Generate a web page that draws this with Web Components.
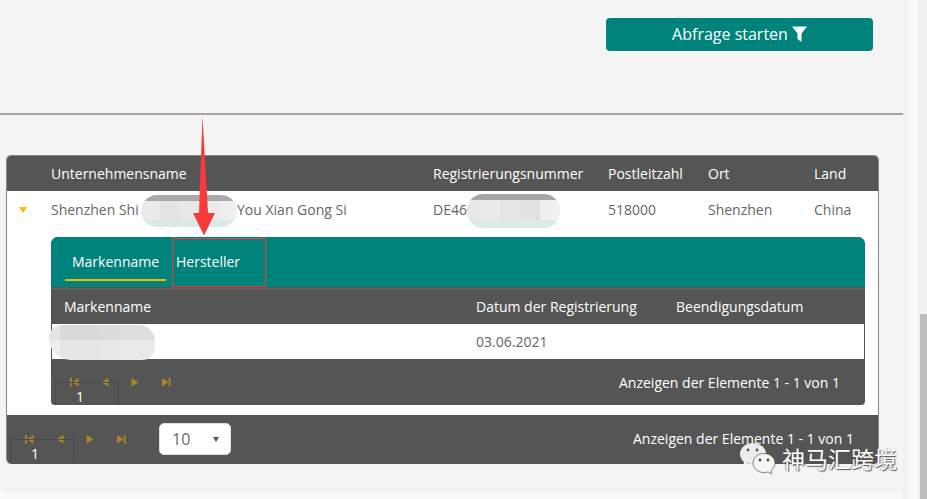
<!DOCTYPE html>
<html><head><meta charset="utf-8"><style>
html,body{margin:0;padding:0;height:499px;overflow:hidden;background:#f9f9f9;font-family:"Open Sans",sans-serif}
</style></head><body>
<app-page></app-page>
<script>
const def=(n,css,html)=>{customElements.define(n,class extends HTMLElement{constructor(){super();const s=this.attachShadow({mode:'open'});s.innerHTML=`<style>${css}</style>${html}`;}})};
const c='#a98722';
const first=`<svg width="10" height="10" viewBox="0 0 10 10"><path d="M1 1h1.800v8.500H1zM9.500 1v8.500L3 5.250z" fill="${c}"/></svg>`;
const prev=`<svg width="10" height="10" viewBox="0 0 10 10"><path d="M8.500 1v8.500L1.500 5.250z" fill="${c}"/></svg>`;
const next=`<svg width="10" height="10" viewBox="0 0 10 10"><path d="M1.500 1v8.500l7-4.250z" fill="${c}"/></svg>`;
const last=`<svg width="10" height="10" viewBox="0 0 10 10"><path d="M9.500 1H7.700v8.500h1.800zM1 1v8.500l6.500-4.250z" fill="${c}"/></svg>`;
def('grid-pager',`:host{display:block;position:relative;width:110px;height:100%}
.icons{display:flex;gap:20.500px;padding-left:var(--il,18px);padding-top:var(--it,18px)}
.icons svg{display:block;flex:none}
.box{position:absolute;left:var(--bl,4px);top:var(--bt,23px);width:64px;bottom:0;border:1px solid #494949;border-bottom:0;color:#fff;font-size:14px;line-height:20px;box-sizing:border-box;padding-left:var(--np,20px);padding-top:4px}`,
`<div class="icons">${first}${prev}${next}${last}</div><div class="box">1</div>`);
def('filter-button',`:host{display:flex;align-items:center;justify-content:center;gap:4px;width:267px;height:33px;background:#00837a;border-radius:4px;color:#fff;font-size:16px;padding-bottom:2px;box-sizing:border-box}
svg{display:block;margin-top:1px}`,`<span>Abfrage starten</span><svg width="15" height="16" viewBox="0 0 15 16"><path d="M0 .500h15L9.500 7.500V16L5.500 13V7.500z" fill="#fff"/></svg>`);
def('app-page',`:host{display:flex;width:927px;height:499px;position:relative;overflow:hidden}
.main{width:903px;height:488px;background:#f4f4f4;box-shadow:0 2px 5px rgba(0,0,0,.05);border-radius:0 0 4px 0;flex:none;display:flex;flex-direction:column}
.filter{display:flex;justify-content:flex-end;padding:18px 30px 0 0;box-sizing:border-box;height:115px;flex:none;border-bottom:2px solid #a5a5a5}
.wrap{padding:40px 0 0 6px}
.grid{width:873px;height:309px;background:#fff;border:1px solid #888;border-bottom:0;box-sizing:border-box;border-radius:5px;overflow:hidden;display:flex;flex-direction:column;color:#666;font-size:14px}
.cols{display:grid;grid-template-columns:44px 382px 175px 100px 106px 1fr;align-items:center}
.head{height:35px;background:#555;color:#fff;flex:none}
.row{height:37px;flex:none;padding-bottom:1px;box-sizing:border-box}
.tri{width:0;height:0;border:4px solid transparent;border-top:6px solid #fcb900;border-bottom:0;margin:1px 0 0 12px}
.detail{margin:9px 0 0 44px;width:814px;height:168px;border-radius:7px 7px 4px 4px;overflow:hidden;background:#555;flex:none;display:flex;flex-direction:column;box-sizing:border-box}
.tabs{height:51px;background:#00837a;display:flex;flex:none;color:#fff;box-sizing:border-box;border-bottom:1px solid #555;padding-left:14px}
.tab{font-size:14px;height:44px;line-height:49px;padding:0 7px;box-sizing:border-box}
.tab.on{border-bottom:2px solid #f5b800;width:101px}
.tab.h{padding:0 0 0 10px;line-height:50px}
.ihead,.irow{display:grid;grid-template-columns:412px 200px 1fr;align-items:center;flex:none}
.ihead{padding-left:13px;height:36px;color:#fff;border-top:1px solid #666;box-sizing:border-box}
.irow{height:35px;background:#fff;margin:0 1px;padding-left:12px}
.ipager{flex:1;display:flex;justify-content:space-between;color:#fff;--it:18px;--bt:23px;--il:18px;padding-right:25px}
.ipager span{align-self:center}
.gap{height:10px;flex:none}
.opager{flex:1;background:#555;display:flex;color:#fff;--it:19px;--bt:24px;--bl:3px;--il:17px;--np:20px;padding:0 24px 2px 0;box-sizing:border-box;position:relative}
.opager span{margin-left:auto;align-self:center}
.sel{position:absolute;left:152px;top:8px;width:72px;height:32px;background:#fff;border:1px solid #ddd;box-sizing:border-box;border-radius:5px;color:#6b6b6b;font-size:16px;line-height:30px;padding-left:12px}
.sel i{position:absolute;right:11px;top:13px;width:0;height:0;border:3.500px solid transparent;border-top:5px solid #555;border-bottom:0}
.gutter{flex:1;display:flex;height:499px}
.shade{width:15px;background:linear-gradient(90deg,#eeeeee,#f9f9f9 70%,#fbfbfb)}
.track{width:9px;background:#f1f1f1;padding:314px 0 0 2px;box-sizing:border-box;height:499px}
.thumb{height:185px;background:#bdbdbd}
.blob{position:absolute;border-radius:16px}
.red{position:absolute;left:172px;top:238px;width:94px;height:49px;border:1px solid #f03b3b;box-sizing:border-box}
.arrow{position:absolute;left:190px;top:115px}
.wm{position:absolute;left:739px;top:440px;display:flex;align-items:center;gap:5px}
.wm svg{display:block}
.wm b{font:400 23px "Noto Sans CJK SC",sans-serif;color:#fff;text-shadow:1px 1px 1px #555,-1px 0 1px rgba(80,80,80,.5);line-height:36px}`,
`<div class="main">
<div class="filter"><filter-button></filter-button></div>
<div class="wrap"><div class="grid">
<div class="cols head"><span></span><span>Unternehmensname</span><span>Registrierungsnummer</span><span>Postleitzahl</span><span>Ort</span><span>Land</span></div>
<div class="cols row"><div class="tri"></div><span>Shenzhen Shi <span style="display:inline-block;width:91px"></span> You Xian Gong Si</span><span>DE46</span><span>518000</span><span>Shenzhen</span><span>China</span></div>
<div class="detail">
<div class="tabs"><div class="tab on">Markenname</div><div class="tab h">Hersteller</div></div>
<div class="ihead"><span>Markenname</span><span>Datum der Registrierung</span><span>Beendigungsdatum</span></div>
<div class="irow"><span></span><span>03.06.2021</span><span></span></div>
<div class="ipager"><grid-pager></grid-pager><span>Anzeigen der Elemente 1 - 1 von 1</span></div>
</div>
<div class="gap"></div>
<div class="opager"><grid-pager></grid-pager><div class="sel">10<i></i></div><span>Anzeigen der Elemente 1 - 1 von 1</span></div>
</div></div>
</div>
<div class="gutter"><div class="shade"></div><div class="track"><div class="thumb"></div></div></div>
<div class="blob" style="left:141px;top:195px;width:96px;height:32px;background:linear-gradient(#a9a9a9 0 6px,transparent 6px 25px,#d9e9e8 25px),linear-gradient(90deg,#eaeaea 0 19px,#e4e4e4 19px 39px,#e8e8e8 39px 59px,#ebebeb 59px 79px,#efefef 79px)"></div>
<div class="blob" style="left:467px;top:194px;width:93px;height:34px;background:linear-gradient(#a6a6a6 0 6px,transparent 6px 26px,#dceaea 26px),linear-gradient(90deg,#e8e8e8 0 13px,#ebebeb 13px 33px,#e6e6e6 33px 53px,#e2e2e2 53px 73px,#f0f0f0 73px)"></div>
<div class="blob" style="left:49px;top:325px;width:106px;height:35px;border-radius:18px 22px 18px 30px;background:linear-gradient(transparent 0 15px,rgba(255,255,255,.35) 15px),linear-gradient(90deg,#e4e4e4 0 11px,#d9d9d9 11px 51px,#dcdcdc 51px 71px,#dedede 71px)"></div>
<div class="red"></div>
<svg class="arrow" width="26" height="122" viewBox="0 0 26 122"><path d="M12.500 1L18 98h7L14 120.500 3 98h6z" fill="#f83a3a"/></svg>
<div class="wm"><svg width="38" height="34" viewBox="0 0 38 34"><path d="M14 2C7 2 1 6.500 1 13c0 3.500 2 6 4 8l-1 4 5-2.500c2 .5 3 .5 5 .5 8 0 13-5 13-10.500S21 2 14 2z" fill="#ececec"/><path d="M25 12.500c-6.500 0-11 4.300-11 9.500s4.500 9.500 11 9.500c1.500 0 2.500-.2 4-.5l4 2-1-3.500c2.500-2 4-4.500 4-7.500 0-5.200-5-9.500-11-9.500z" fill="#f5f5f5" stroke="#555" stroke-width=".7"/><circle cx="9" cy="9" r="1.400" fill="#555"/><circle cx="18" cy="9" r="1.400" fill="#555"/><circle cx="21" cy="19" r="1.400" fill="#444"/><circle cx="29" cy="19" r="1.400" fill="#444"/></svg><b>神马汇跨境</b></div>`);
</script>
</body></html>
